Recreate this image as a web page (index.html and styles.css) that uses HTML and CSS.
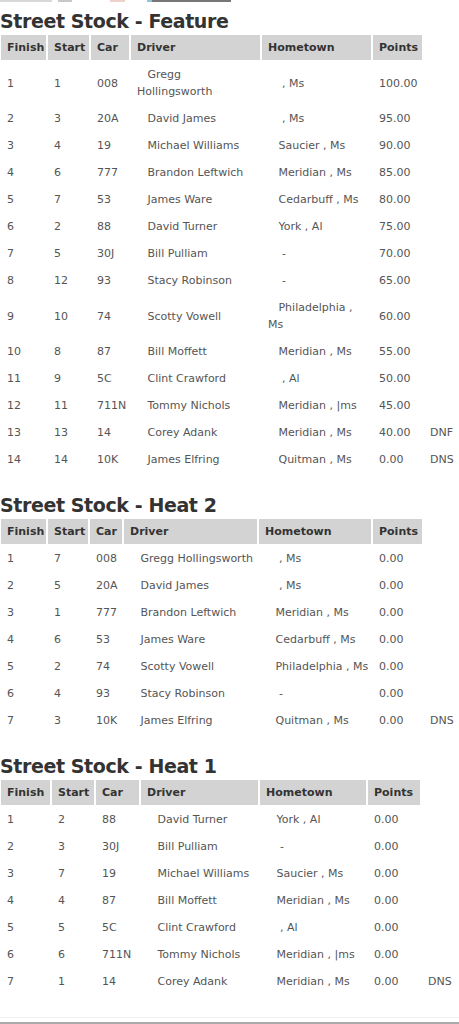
FILE: index.html
```html
<!DOCTYPE html>
<html lang="en">
<head>
  <meta charset="UTF-8" />
  <meta name="viewport" content="width=device-width, initial-scale=1.0"/>
  <title>Street Stock Results</title>
  <link rel="stylesheet" href="styles.css">
</head>
<body>

<div class="top-strip">
  <span class="bit bit-a"></span>
  <span class="bit bit-b"></span>
  <span class="bit bit-c"></span>
  <span class="bit bit-d"></span>
</div>

<h2 class="race-title first">Street Stock - Feature</h2>
<table class="results" id="feature">
  <colgroup>
    <col class="finish"><col class="start"><col class="car"><col class="driver"><col class="town"><col class="points"><col class="extra">
  </colgroup>
  <thead>
    <tr><th>Finish</th><th>Start</th><th>Car</th><th>Driver</th><th>Hometown</th><th>Points</th></tr>
  </thead>
  <tbody>
    <tr><td>1</td><td>1</td><td>008</td><td>&nbsp;&nbsp;&nbsp;Gregg Hollingsworth</td><td>&nbsp;&nbsp;&nbsp; , Ms</td><td>100.00</td></tr>
    <tr><td>2</td><td>3</td><td>20A</td><td>&nbsp;&nbsp;&nbsp;David James</td><td>&nbsp;&nbsp;&nbsp; , Ms</td><td>95.00</td></tr>
    <tr><td>3</td><td>4</td><td>19</td><td>&nbsp;&nbsp;&nbsp;Michael Williams</td><td>&nbsp;&nbsp;&nbsp;Saucier , Ms</td><td>90.00</td></tr>
    <tr><td>4</td><td>6</td><td>777</td><td>&nbsp;&nbsp;&nbsp;Brandon Leftwich</td><td>&nbsp;&nbsp;&nbsp;Meridian , Ms</td><td>85.00</td></tr>
    <tr><td>5</td><td>7</td><td>53</td><td>&nbsp;&nbsp;&nbsp;James Ware</td><td>&nbsp;&nbsp;&nbsp;Cedarbuff , Ms</td><td>80.00</td></tr>
    <tr><td>6</td><td>2</td><td>88</td><td>&nbsp;&nbsp;&nbsp;David Turner</td><td>&nbsp;&nbsp;&nbsp;York , Al</td><td>75.00</td></tr>
    <tr><td>7</td><td>5</td><td>30J</td><td>&nbsp;&nbsp;&nbsp;Bill Pulliam</td><td>&nbsp;&nbsp;&nbsp; -</td><td>70.00</td></tr>
    <tr><td>8</td><td>12</td><td>93</td><td>&nbsp;&nbsp;&nbsp;Stacy Robinson</td><td>&nbsp;&nbsp;&nbsp; -</td><td>65.00</td></tr>
    <tr><td>9</td><td>10</td><td>74</td><td>&nbsp;&nbsp;&nbsp;Scotty Vowell</td><td>&nbsp;&nbsp;&nbsp;Philadelphia , Ms</td><td>60.00</td></tr>
    <tr><td>10</td><td>8</td><td>87</td><td>&nbsp;&nbsp;&nbsp;Bill Moffett</td><td>&nbsp;&nbsp;&nbsp;Meridian , Ms</td><td>55.00</td></tr>
    <tr><td>11</td><td>9</td><td>5C</td><td>&nbsp;&nbsp;&nbsp;Clint Crawford</td><td>&nbsp;&nbsp;&nbsp; , Al</td><td>50.00</td></tr>
    <tr><td>12</td><td>11</td><td>711N</td><td>&nbsp;&nbsp;&nbsp;Tommy Nichols</td><td>&nbsp;&nbsp;&nbsp;Meridian , |ms</td><td>45.00</td></tr>
    <tr><td>13</td><td>13</td><td>14</td><td>&nbsp;&nbsp;&nbsp;Corey Adank</td><td>&nbsp;&nbsp;&nbsp;Meridian , Ms</td><td>40.00</td><td>DNF</td></tr>
    <tr><td>14</td><td>14</td><td>10K</td><td>&nbsp;&nbsp;&nbsp;James Elfring</td><td>&nbsp;&nbsp;&nbsp;Quitman , Ms</td><td>0.00</td><td>DNS</td></tr>
  </tbody>
</table>

<h2 class="race-title">Street Stock - Heat 2</h2>
<table class="results" id="heat2">
  <colgroup>
    <col class="finish"><col class="start"><col class="car"><col class="driver"><col class="town"><col class="points"><col class="extra">
  </colgroup>
  <thead>
    <tr><th>Finish</th><th>Start</th><th>Car</th><th>Driver</th><th>Hometown</th><th>Points</th></tr>
  </thead>
  <tbody>
    <tr><td>1</td><td>7</td><td>008</td><td>&nbsp;&nbsp;&nbsp;Gregg Hollingsworth</td><td>&nbsp;&nbsp;&nbsp; , Ms</td><td>0.00</td></tr>
    <tr><td>2</td><td>5</td><td>20A</td><td>&nbsp;&nbsp;&nbsp;David James</td><td>&nbsp;&nbsp;&nbsp; , Ms</td><td>0.00</td></tr>
    <tr><td>3</td><td>1</td><td>777</td><td>&nbsp;&nbsp;&nbsp;Brandon Leftwich</td><td>&nbsp;&nbsp;&nbsp;Meridian , Ms</td><td>0.00</td></tr>
    <tr><td>4</td><td>6</td><td>53</td><td>&nbsp;&nbsp;&nbsp;James Ware</td><td>&nbsp;&nbsp;&nbsp;Cedarbuff , Ms</td><td>0.00</td></tr>
    <tr><td>5</td><td>2</td><td>74</td><td>&nbsp;&nbsp;&nbsp;Scotty Vowell</td><td>&nbsp;&nbsp;&nbsp;Philadelphia , Ms</td><td>0.00</td></tr>
    <tr><td>6</td><td>4</td><td>93</td><td>&nbsp;&nbsp;&nbsp;Stacy Robinson</td><td>&nbsp;&nbsp;&nbsp; -</td><td>0.00</td></tr>
    <tr><td>7</td><td>3</td><td>10K</td><td>&nbsp;&nbsp;&nbsp;James Elfring</td><td>&nbsp;&nbsp;&nbsp;Quitman , Ms</td><td>0.00</td><td>DNS</td></tr>
  </tbody>
</table>

<h2 class="race-title">Street Stock - Heat 1</h2>
<table class="results" id="heat1">
  <colgroup>
    <col class="finish"><col class="start"><col class="car"><col class="driver"><col class="town"><col class="points"><col class="extra">
  </colgroup>
  <thead>
    <tr><th>Finish</th><th>Start</th><th>Car</th><th>Driver</th><th>Hometown</th><th>Points</th></tr>
  </thead>
  <tbody>
    <tr><td>1</td><td>2</td><td>88</td><td>&nbsp;&nbsp;&nbsp;David Turner</td><td>&nbsp;&nbsp;&nbsp;York , Al</td><td>0.00</td></tr>
    <tr><td>2</td><td>3</td><td>30J</td><td>&nbsp;&nbsp;&nbsp;Bill Pulliam</td><td>&nbsp;&nbsp;&nbsp; -</td><td>0.00</td></tr>
    <tr><td>3</td><td>7</td><td>19</td><td>&nbsp;&nbsp;&nbsp;Michael Williams</td><td>&nbsp;&nbsp;&nbsp;Saucier , Ms</td><td>0.00</td></tr>
    <tr><td>4</td><td>4</td><td>87</td><td>&nbsp;&nbsp;&nbsp;Bill Moffett</td><td>&nbsp;&nbsp;&nbsp;Meridian , Ms</td><td>0.00</td></tr>
    <tr><td>5</td><td>5</td><td>5C</td><td>&nbsp;&nbsp;&nbsp;Clint Crawford</td><td>&nbsp;&nbsp;&nbsp; , Al</td><td>0.00</td></tr>
    <tr><td>6</td><td>6</td><td>711N</td><td>&nbsp;&nbsp;&nbsp;Tommy Nichols</td><td>&nbsp;&nbsp;&nbsp;Meridian , |ms</td><td>0.00</td></tr>
    <tr><td>7</td><td>1</td><td>14</td><td>&nbsp;&nbsp;&nbsp;Corey Adank</td><td>&nbsp;&nbsp;&nbsp;Meridian , Ms</td><td>0.00</td><td>DNS</td></tr>
  </tbody>
</table>

<div class="footer"></div>

</body>
</html>
```

FILE: styles.css
```css
body {
  font-family: "DejaVu Sans", Verdana, sans-serif;
  background: #fff;
  color: #555;
  margin: 0;
  padding: 0;
}
.top-strip {
  display: flex;
  height: 2px;
}
.bit {
  display: block;
  height: 2px;
}
.bit-a { width: 52px; background: #d8d8d8; }
.bit-b { width: 14px; margin-left: 6px; background: #c8c8c8; }
.bit-c { width: 15px; margin-left: 38px; background: #ecd2c8; }
.bit-d { width: 79px; margin-left: 22px; background: #777; border-left: 5px solid #8cc4d8; }

.race-title {
  font-size: 19px;
  letter-spacing: -0.4px;
  line-height: 24px;
  font-weight: bold;
  color: #333;
  margin: 19px 0 0;
}
.race-title.first {
  margin-top: 7px;
}

.results {
  table-layout: fixed;
  border-collapse: separate;
  border-spacing: 2px;
  margin-left: -1px;
  font-size: 11px;
  line-height: 17px;
}
.results th, .results td {
  padding: 4px 1px 4px 6px;
  text-align: left;
  vertical-align: middle;
}
.results th {
  background: #d3d3d3;
  color: #333;
  font-weight: bold;
}
.results td {
  color: #555;
}

#feature { width: 459px; }
#feature .finish { width: 45px; }
#feature .start { width: 41px; }
#feature .car { width: 38px; }
#feature .driver { width: 129px; }
#feature .town { width: 109px; }
#feature .points { width: 49px; }
#feature .extra { width: 32px; }

#heat2 { width: 459px; }
#heat2 .finish { width: 45px; }
#heat2 .start { width: 40px; }
#heat2 .car { width: 32px; }
#heat2 .driver { width: 133px; }
#heat2 .town { width: 112px; }
#heat2 .points { width: 49px; }
#heat2 .extra { width: 32px; }

#heat1 { width: 459px; }
#heat1 .finish { width: 49px; }
#heat1 .start { width: 42px; }
#heat1 .car { width: 43px; }
#heat1 .driver { width: 117px; }
#heat1 .town { width: 106px; }
#heat1 .points { width: 52px; }
#heat1 .extra { width: 34px; }

.footer {
  margin-top: 21px;
  height: 4px;
  border-top: 1px solid #f0f0f0;
  border-bottom: 2px solid #aaa;
}
```
